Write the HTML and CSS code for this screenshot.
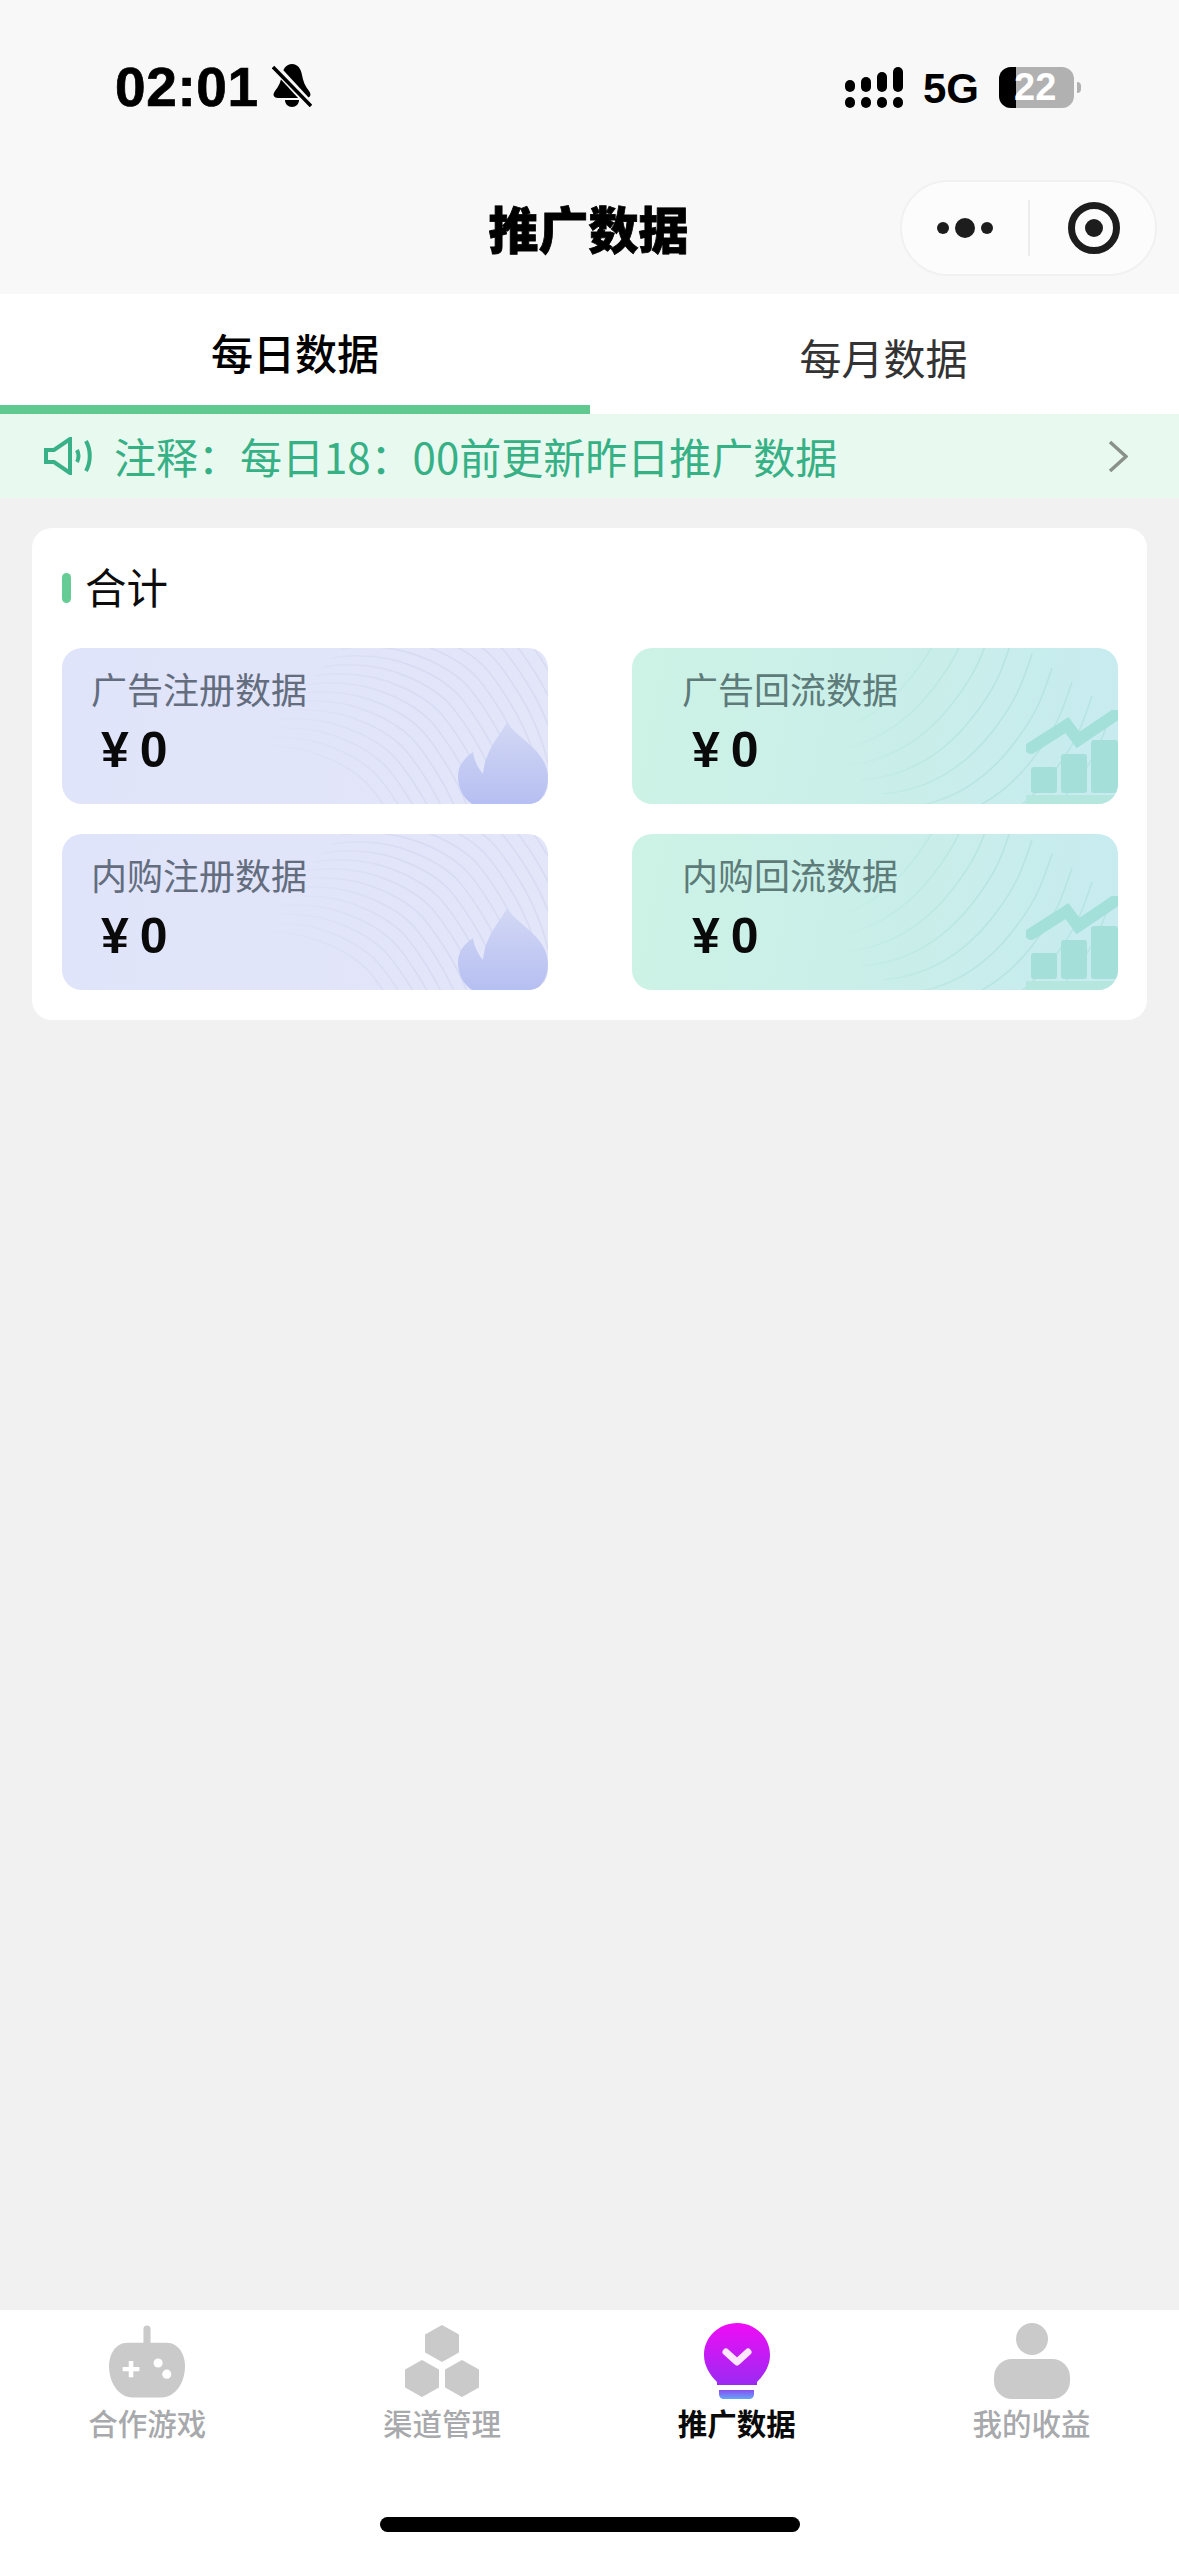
FILE: index.html
```html
<!DOCTYPE html>
<html lang="zh-CN">
<head>
<meta charset="utf-8">
<title>推广数据</title>
<link rel="stylesheet" href="styles.css">
</head>
<body>
<svg class="defs" width="0" height="0" aria-hidden="true">
  <defs>
    <path id="wb" d="M0 0C30-5 60-2 90 12S130 38 150 70S180 130 190 190"/>
    <path id="wg" d="M0 0C50-4 85-30 110-62S140-110 150-140"/>
    <symbol id="waves-blue" viewBox="0 0 486 156">
      <g class="wave-lines-blue">
        <use href="#wb" x="180" y="100"/><use href="#wb" x="189" y="91"/><use href="#wb" x="198" y="82"/>
        <use href="#wb" x="207" y="73"/><use href="#wb" x="216" y="64"/><use href="#wb" x="225" y="55"/>
        <use href="#wb" x="234" y="46"/><use href="#wb" x="243" y="37"/><use href="#wb" x="252" y="28"/>
        <use href="#wb" x="261" y="19"/><use href="#wb" x="270" y="10"/><use href="#wb" x="279" y="1"/>
        <use href="#wb" x="288" y="-8"/><use href="#wb" x="297" y="-17"/><use href="#wb" x="306" y="-26"/>
        <use href="#wb" x="315" y="-35"/><use href="#wb" x="324" y="-44"/><use href="#wb" x="333" y="-53"/>
        <use href="#wb" x="342" y="-62"/><use href="#wb" x="351" y="-71"/><use href="#wb" x="360" y="-80"/>
        <use href="#wb" x="369" y="-89"/><use href="#wb" x="378" y="-98"/>
      </g>
    </symbol>
    <symbol id="waves-green" viewBox="0 0 486 156">
      <g class="wave-lines-green">
        <use href="#wg" x="170" y="90"/><use href="#wg" x="190" y="104"/><use href="#wg" x="210" y="118"/>
        <use href="#wg" x="230" y="132"/><use href="#wg" x="250" y="146"/><use href="#wg" x="270" y="160"/>
        <use href="#wg" x="290" y="174"/><use href="#wg" x="310" y="188"/><use href="#wg" x="330" y="202"/>
      </g>
    </symbol>
    <linearGradient id="flame-grad" x1="0" y1="0" x2="0" y2="1">
      <stop offset="0" stop-color="#d3d8f4"/><stop offset="1" stop-color="#b6bff2"/>
    </linearGradient>
    <linearGradient id="bulb-grad" x1="0" y1="0" x2="0" y2="1">
      <stop offset="0" stop-color="#f00cf6"/><stop offset="1" stop-color="#9a2bf2"/>
    </linearGradient>
    <linearGradient id="base-grad" x1="0" y1="0" x2="0" y2="1">
      <stop offset="0" stop-color="#8a4cf0"/><stop offset="1" stop-color="#62a8f8"/>
    </linearGradient>
    <symbol id="flame" viewBox="0 0 90 82">
      <path fill="url(#flame-grad)" d="M49 0C58 16 90 28 90 56C90 68 85 76 78 82H14C5 76 0 66 0 54C0 44 6 36 15 30C16 38 20 46 25 52C26 44 27 38 31 30C35 20 44 10 49 0Z"/>
    </symbol>
    <symbol id="chart" viewBox="0 0 92 94">
      <path class="chart-line" d="M5 38L41 15L52 30L92 3"/>
      <rect class="chart-bar" x="5" y="57" width="26" height="26" rx="3"/>
      <rect class="chart-bar" x="35" y="44" width="26" height="39" rx="3"/>
      <rect class="chart-bar" x="65" y="30" width="27" height="53" rx="3"/>
      <rect class="chart-base" x="0" y="85" width="92" height="9"/>
    </symbol>
  </defs>
</svg>

<div class="page">
  <header class="top">
    <div class="status">
      <div class="status-left">
        <span class="time">02:01</span>
        <svg class="bell" viewBox="0 0 40 43">
          <path d="M20 0C26 0 29 5 30 11C31 17 33 22 37 27C40 31 38 34 34 34H6C2 34 0 31 3 27C7 22 9 17 10 11C11 5 14 0 20 0Z"/>
          <path d="M13 36H27C27 40 24 43 20 43S13 40 13 36Z"/>
          <path class="bell-gap" d="M2 2L38 41"/>
          <path class="bell-slash" d="M1 3L39 42"/>
        </svg>
      </div>
      <div class="status-right">
        <svg class="signal" viewBox="0 0 58 41">
          <rect x="0" y="13" width="10" height="12" rx="5"/><rect x="16" y="10" width="10" height="15" rx="5"/>
          <rect x="32" y="5" width="10" height="20" rx="5"/><rect x="48" y="0" width="10" height="25" rx="5"/>
          <rect x="0" y="30" width="10" height="11" rx="5"/><rect x="16" y="30" width="10" height="11" rx="5"/>
          <rect x="32" y="30" width="10" height="11" rx="5"/><rect x="48" y="30" width="10" height="11" rx="5"/>
        </svg>
        <span class="net">5G</span>
        <div class="battery">
          <div class="battery-body"><span class="battery-fill"></span><span class="battery-num">22</span></div>
          <span class="battery-nub"></span>
        </div>
      </div>
    </div>
    <div class="navbar">
      <span></span>
      <h1 class="title">推广数据</h1>
      <div class="capsule">
        <svg class="more" viewBox="0 0 56 20"><circle cx="6" cy="10" r="6"/><circle cx="28" cy="10" r="10"/><circle cx="50" cy="10" r="6"/></svg>
        <span class="capsule-sep"></span>
        <svg class="target" viewBox="0 0 52 52"><circle class="target-ring" cx="26" cy="26" r="22.5"/><circle cx="26" cy="26" r="9"/></svg>
      </div>
    </div>
  </header>

  <nav class="tabs">
    <div class="tab tab-active">每日数据</div>
    <div class="tab tab-idle">每月数据</div>
  </nav>

  <div class="notice">
    <svg class="speaker" viewBox="0 0 48 38">
      <path d="M2 13H10L26 2V36L10 25H2Z"/>
      <path d="M33 13C35 17 35 21 33 25"/>
      <path d="M42 4C47 13 47 25 42 34"/>
    </svg>
    <span class="notice-text">注释&#xFF1A;每日18&#xFF1A;00前更新昨日推广数据</span>
    <svg class="chevron" viewBox="0 0 20 33"><path d="M2 2L18 16.500L2 31"/></svg>
  </div>

  <section class="panel">
    <div class="panel-head"><span class="panel-mark"></span><span class="panel-title">合计</span></div>
    <div class="stats">
      <div class="stat stat-blue">
        <svg class="waves"><use href="#waves-blue"/></svg>
        <svg class="deco-flame"><use href="#flame"/></svg>
        <div class="stat-label">广告注册数据</div>
        <div class="stat-value">¥ 0</div>
      </div>
      <div class="stat stat-green">
        <svg class="waves"><use href="#waves-green"/></svg>
        <svg class="deco-chart"><use href="#chart"/></svg>
        <div class="stat-label">广告回流数据</div>
        <div class="stat-value">¥ 0</div>
      </div>
      <div class="stat stat-blue">
        <svg class="waves"><use href="#waves-blue"/></svg>
        <svg class="deco-flame"><use href="#flame"/></svg>
        <div class="stat-label">内购注册数据</div>
        <div class="stat-value">¥ 0</div>
      </div>
      <div class="stat stat-green">
        <svg class="waves"><use href="#waves-green"/></svg>
        <svg class="deco-chart"><use href="#chart"/></svg>
        <div class="stat-label">内购回流数据</div>
        <div class="stat-value">¥ 0</div>
      </div>
    </div>
  </section>

  <footer class="bottom">
    <div class="bottom-items">
      <div class="item">
        <svg class="item-icon" viewBox="0 0 75 74">
          <rect class="i-gray" x="34" y="2" width="7" height="22" rx="3.500"/>
          <path class="i-gray" d="M18 19H57C68 19 75 30 75 42C75 59 65 73 52 73H23C10 73 0 59 0 42C0 30 7 19 18 19Z"/>
          <path class="i-white" d="M19.500 37H24V43H30V47H24V53H19.500V47H13.500V43H19.500Z"/>
          <circle class="i-white" cx="48.500" cy="39" r="4.500"/><circle class="i-white" cx="57" cy="50" r="4.500"/>
        </svg>
        <span class="item-label">合作游戏</span>
      </div>
      <div class="item">
        <svg class="item-icon" viewBox="0 0 76 74">
          <path class="i-hex" d="M38 2L54 11V28L38 37L22 28V11Z"/>
          <path class="i-hex" d="M18 37L34 46V63L18 72L2 63V46Z"/>
          <path class="i-hex" d="M58 37L74 46V63L58 72L42 63V46Z"/>
        </svg>
        <span class="item-label">渠道管理</span>
      </div>
      <div class="item item-on">
        <svg class="item-icon" viewBox="0 0 66 76">
          <path fill="url(#bulb-grad)" d="M33 0C51 0 66 14 66 32C66 43 60 52 53 59V62H13V59C6 52 0 43 0 32C0 14 15 0 33 0Z"/>
          <path fill="url(#base-grad)" d="M15 67H50V71C50 74 48 76 45 76H20C17 76 15 74 15 71Z"/>
          <path class="i-check" d="M22 29L33 39L44 29"/>
        </svg>
        <span class="item-label">推广数据</span>
      </div>
      <div class="item">
        <svg class="item-icon" viewBox="0 0 76 76">
          <ellipse class="i-gray" cx="38" cy="16" rx="16" ry="16"/>
          <rect class="i-gray" x="0" y="36" width="76" height="40" rx="18"/>
        </svg>
        <span class="item-label">我的收益</span>
      </div>
    </div>
    <div class="home-wrap"><span class="home"></span></div>
  </footer>
</div>
</body>
</html>
```
FILE: styles.css
```css
* { box-sizing: border-box; }
html, body { margin: 0; padding: 0; }
body { font-family: "Noto Sans CJK SC", "Liberation Sans", sans-serif; }
.defs { display: block; height: 0; overflow: hidden; }

.page {
  width: 1179px;
  height: 2556px;
  display: flex;
  flex-direction: column;
  background: #f1f1f1;
  overflow: hidden;
}

/* header */
.top { height: 294px; background: #f8f8f8; flex: none; }
.status {
  height: 180px;
  padding: 64px 98px 0 115px;
  display: flex;
  justify-content: space-between;
  align-items: flex-start;
}
.status-left { display: flex; align-items: flex-start; gap: 13px; }
.time {
  font: 700 55px/46px "Liberation Sans", sans-serif;
  letter-spacing: .6px;
  color: #000;
  -webkit-text-stroke: .7px #000;
}
.bell { width: 40px; height: 43px; fill: #000; }
.bell-gap { stroke: #f8f8f8; stroke-width: 8; fill: none; }
.bell-slash { stroke: #000; stroke-width: 3.500; fill: none; }
.status-right { display: flex; align-items: flex-start; padding-top: 3px; }
.signal { width: 58px; height: 41px; fill: #000; margin-right: 20px; }
.net {
  font: 700 42px/44px "Liberation Sans", sans-serif;
  color: #000;
  margin-right: 20px;
}
.battery { display: flex; align-items: center; gap: 3px; }
.battery-body {
  width: 75px;
  height: 41px;
  border-radius: 12px;
  background: #b1b1b1;
  overflow: hidden;
  display: flex;
  align-items: center;
  position: relative;
}
.battery-fill { width: 17px; height: 41px; background: #000; flex: none; }
.battery-num {
  position: absolute;
  left: 15px;
  top: 0;
  font: 700 38px/41px "Liberation Sans", sans-serif;
  color: #fff;
}
.battery-nub {
  width: 4px;
  height: 11px;
  background: #b1b1b1;
  border-radius: 0 4px 4px 0;
}

.navbar {
  height: 114px;
  display: grid;
  grid-template-columns: 1fr auto 1fr;
}
.title {
  margin: 0 2px 0 0;
  font-size: 50px;
  line-height: 94px;
  height: 94px;
  font-weight: 900;
  color: #000;
  -webkit-text-stroke: 0.8px #000;
}
.capsule {
  justify-self: end;
  margin-right: 22px;
  width: 257px;
  height: 96px;
  border-radius: 48px;
  background: #fcfcfc;
  border: 2px solid #f1f1f1;
  display: flex;
  align-items: center;
  padding-left: 35px;
}
.more { width: 56px; height: 20px; fill: #1d1d1d; flex: none; }
.capsule-sep { width: 2px; height: 56px; background: #ececec; margin-left: 35px; flex: none; }
.target { width: 52px; height: 52px; fill: #1d1d1d; margin-left: 38px; flex: none; }
.target-ring { fill: none; stroke: #1d1d1d; stroke-width: 7; }

/* tabs */
.tabs { height: 120px; display: flex; background: #fff; flex: none; }
.tab {
  flex: 1;
  text-align: center;
  font-size: 42px;
  line-height: 50px;
}
.tab-active {
  padding-top: 33px;
  font-weight: 500;
  color: #000;
  border-bottom: 9px solid #5fc98f;
  flex: 0 0 590px;
}
.tab-idle { padding-top: 38px; padding-right: 2px; color: #333; font-weight: 400; }

/* notice */
.notice {
  height: 84px;
  flex: none;
  background: #e8f9ef;
  display: flex;
  align-items: center;
  padding: 0 51px 0 44px;
}
.speaker { width: 48px; height: 38px; fill: none; stroke: #38b088; stroke-width: 4; flex: none; }
.notice-text {
  margin-left: 22px;
  font-size: 42px;
  line-height: 50px;
  color: #36b085;
  flex: 1;
  white-space: nowrap;
}
.chevron { width: 20px; height: 33px; fill: none; stroke: #8a908c; stroke-width: 3.500; flex: none; }

/* panel */
.panel {
  margin: 30px 32px 0;
  padding: 30px 29px 30px 30px;
  background: #fff;
  border-radius: 20px;
  flex: none;
}
.panel-head { height: 60px; display: flex; align-items: center; gap: 14px; margin-bottom: 30px; }
.panel-mark { width: 9px; height: 30px; border-radius: 5px; background: #66cc95; }
.panel-title { font-size: 41.500px; line-height: 56px; height: 60px; color: #0c0c0c; }
.stats {
  display: grid;
  grid-template-columns: 486px 486px;
  justify-content: space-between;
  row-gap: 30px;
}
.stat {
  height: 156px;
  border-radius: 20px;
  position: relative;
  overflow: hidden;
  padding-top: 18px;
}
.stat-blue { background: linear-gradient(100deg, #e0e4fa, #e3e6f9); padding-left: 29px; }
.stat-green { background: linear-gradient(100deg, #cdf3e6, #c9eeea 60%, #c7ebf0); padding-left: 50px; }
.stat-label {
  position: relative;
  font-size: 36px;
  line-height: 44px;
  white-space: nowrap;
}
.stat-blue .stat-label { color: #636d7e; }
.stat-green .stat-label { color: #5d7b79; }
.stat-value {
  position: relative;
  margin-top: 10px;
  padding-left: 10px;
  font: 700 50px/60px "Liberation Sans", sans-serif;
  letter-spacing: -1.500px;
  color: #0a0a0a;
  white-space: pre;
}
.waves {
  position: absolute;
  inset: 0;
  width: 100%;
  height: 100%;
  -webkit-mask-image: linear-gradient(90deg, transparent 42%, #000 72%);
  mask-image: linear-gradient(90deg, transparent 42%, #000 72%);
}
.wave-lines-blue { fill: none; stroke: #cfd3ee; stroke-width: 1.500; opacity: .55; }
.wave-lines-green { fill: none; stroke: #8ccdc9; stroke-width: 1.500; opacity: .28; }
.deco-flame { position: absolute; right: 0; bottom: 0; width: 90px; height: 82px; }
.deco-chart { position: absolute; right: 0; bottom: 0; width: 92px; height: 94px; }
.chart-line { fill: none; stroke: #a2e0d9; stroke-width: 12; stroke-linecap: round; stroke-linejoin: miter; }
.chart-bar { fill: #a5dfd9; }
.chart-base { fill: #b6e7df; }

/* bottom nav */
.bottom {
  margin-top: auto;
  height: 246px;
  background: #fff;
  display: flex;
  flex-direction: column;
  flex: none;
}
.bottom-items { display: grid; grid-template-columns: repeat(4, 1fr); padding-top: 13px; }
.item { display: flex; flex-direction: column; align-items: center; }
.item-icon { height: 76px; width: 76px; }
.item-label {
  margin-top: 3px;
  font-size: 29.500px;
  line-height: 40px;
  font-weight: 500;
  color: #a7a9ac;
}
.item-on .item-label { color: #0a0a0a; font-weight: 700; }
.i-gray { fill: #cacaca; }
.i-white { fill: #fff; }
.i-hex { fill: #cacaca; stroke: #cacaca; stroke-width: 2; stroke-linejoin: round; }
.i-check { fill: none; stroke: #ffe8ff; stroke-width: 7; stroke-linecap: round; stroke-linejoin: round; }
.home-wrap { display: flex; justify-content: center; padding-top: 75px; }
.home { width: 420px; height: 15px; border-radius: 8px; background: #000; }
```
